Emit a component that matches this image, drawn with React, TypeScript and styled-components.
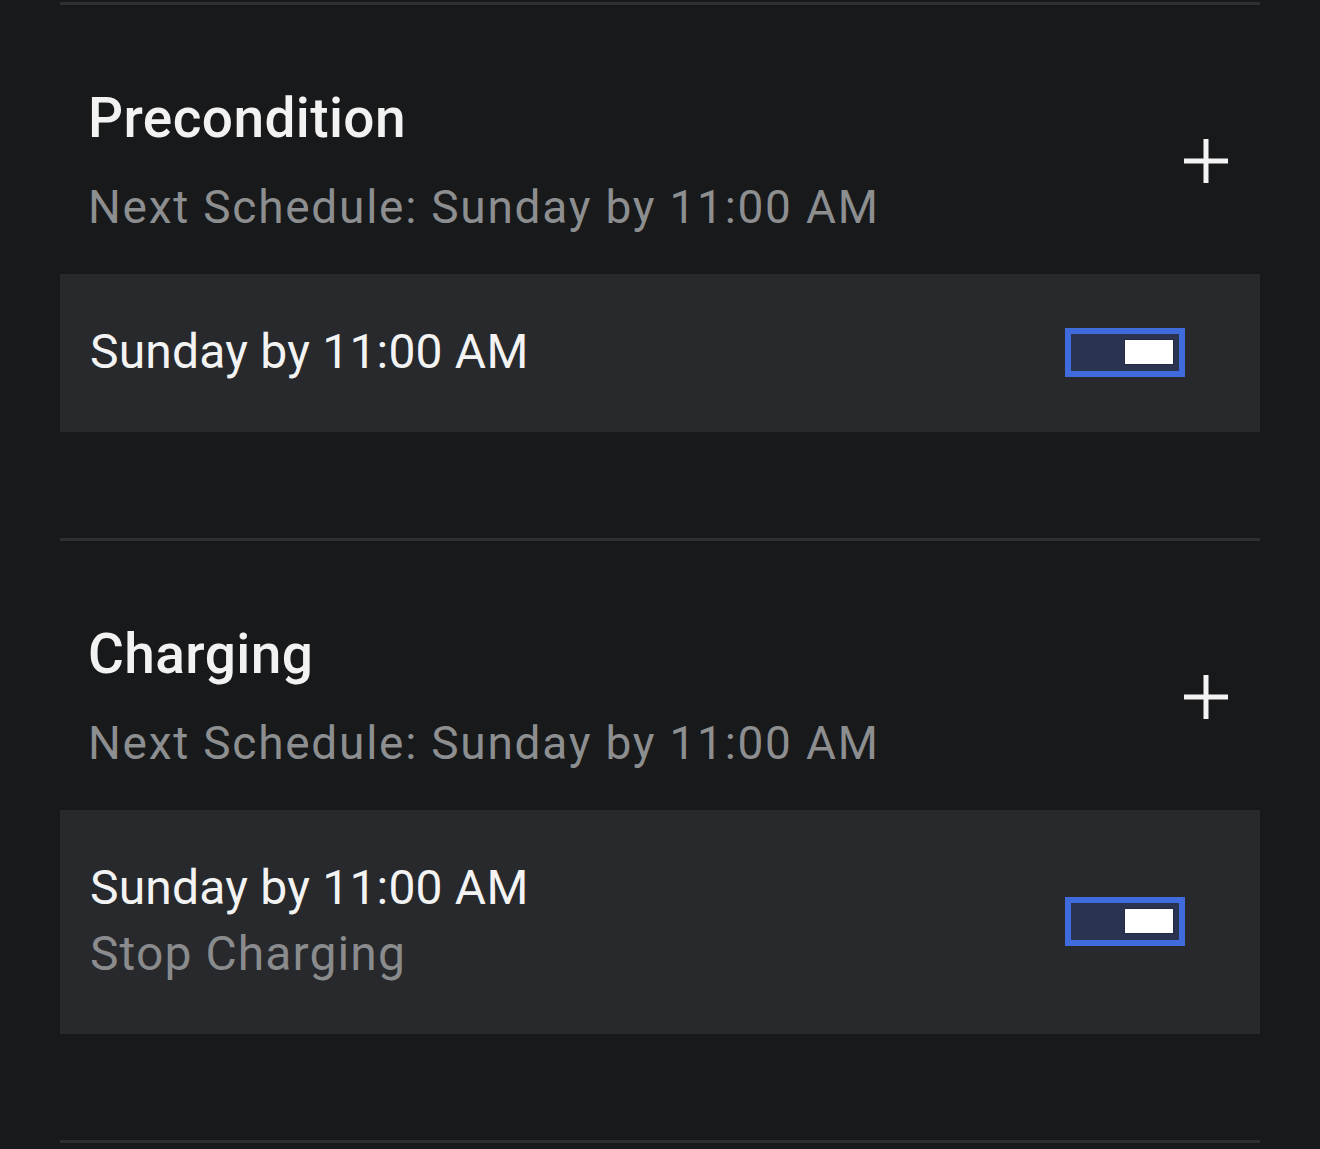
import React from 'react'
import styled, { createGlobalStyle } from 'styled-components'

const GlobalStyle = createGlobalStyle`
  html, body {
    margin: 0;
    padding: 0;
    background-color: #18191b;
  }
  body {
    font-family: Roboto, 'Liberation Sans', sans-serif;
    -webkit-font-smoothing: antialiased;
  }
`

const Page = styled.div`
  min-height: 1149px;
  background-color: #18191b;
  padding: 2px 60px 0;
  box-sizing: border-box;
`

const Divider = styled.div`
  height: 3px;
  background-color: #2f3033;
`

const Section = styled.section`
  padding: 81px 0 106px;
`

const Header = styled.div`
  display: flex;
  align-items: center;
  justify-content: space-between;
  padding: 0 32px 39px 28px;
`

const Titles = styled.div`
  display: flex;
  flex-direction: column;
  gap: 29px;
`

const Title = styled.h2`
  margin: 0;
  font-size: 55px;
  line-height: 64px;
  font-weight: 500;
  letter-spacing: 0.4px;
  color: #f2f2f2;
`

const Subtitle = styled.p`
  margin: 0;
  font-size: 46px;
  line-height: 56px;
  font-weight: 400;
  letter-spacing: 1.75px;
  color: #8d8e90;
`

const AddButton = styled.button`
  width: 44px;
  height: 44px;
  padding: 0;
  border: none;
  background: none;
  display: flex;
  cursor: pointer;
`

const Card = styled.div`
  display: flex;
  align-items: center;
  justify-content: space-between;
  background-color: #28292c;
  padding: 50px 75px 52px 30px;
`

const CardText = styled.div`
  display: flex;
  flex-direction: column;
  gap: 10px;
`

const CardLine = styled.span<{ $muted?: boolean }>`
  font-size: 48px;
  line-height: 56px;
  font-weight: 400;
  letter-spacing: ${p => (p.$muted ? '1.1px' : '0.2px')};
  color: ${p => (p.$muted ? '#8a8b8d' : '#f3f3f3')};
`

const Toggle = styled.div<{ $on: boolean }>`
  width: 120px;
  height: 49px;
  box-sizing: border-box;
  border: 6px solid #3f6bdc;
  background-color: #2a3350;
  display: flex;
  align-items: center;
  justify-content: ${p => (p.$on ? 'flex-end' : 'flex-start')};
  padding: 0 6px;
`

const Knob = styled.div`
  width: 48px;
  height: 24px;
  background-color: #ffffff;
  box-shadow: 0 0 0 1px #222940;
`

const PlusIcon = () => (
  <svg width='44' height='44' viewBox='0 0 44 44'>
    <rect x='0' y='19.5' width='44' height='5' fill='#f4f4f4' />
    <rect x='19.5' y='0' width='5' height='44' fill='#f4f4f4' />
  </svg>
)

type Schedule = {
  title: string
  next: string
  time: string
  note?: string
  enabled: boolean
}

const schedules: Schedule[] = [
  {
    title: 'Precondition',
    next: 'Next Schedule: Sunday by 11:00 AM',
    time: 'Sunday by 11:00 AM',
    enabled: true,
  },
  {
    title: 'Charging',
    next: 'Next Schedule: Sunday by 11:00 AM',
    time: 'Sunday by 11:00 AM',
    note: 'Stop Charging',
    enabled: true,
  },
]

const App = () => {
  return (
    <>
      <GlobalStyle />
      <Page>
        {schedules.map(s => (
          <React.Fragment key={s.title}>
            <Divider />
            <Section>
              <Header>
                <Titles>
                  <Title>{s.title}</Title>
                  <Subtitle>{s.next}</Subtitle>
                </Titles>
                <AddButton aria-label={`Add ${s.title} schedule`}>
                  <PlusIcon />
                </AddButton>
              </Header>
              <Card>
                <CardText>
                  <CardLine>{s.time}</CardLine>
                  {s.note && <CardLine $muted>{s.note}</CardLine>}
                </CardText>
                <Toggle $on={s.enabled}>
                  <Knob />
                </Toggle>
              </Card>
            </Section>
          </React.Fragment>
        ))}
        <Divider />
      </Page>
    </>
  )
}

export default App
